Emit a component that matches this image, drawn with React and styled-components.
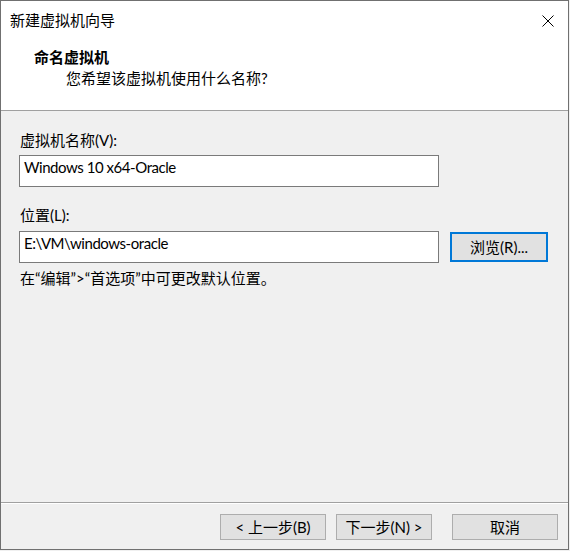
import React from "react";
import styled, { createGlobalStyle } from "styled-components";

const FONT = `Lato, "Noto Sans CJK SC", sans-serif`;

const Global = createGlobalStyle`
  html, body { margin: 0; padding: 0; background: #f0f0f0; }
  body {
    font-family: ${FONT};
    font-size: 15px;
    color: #000;
  }
  * { box-sizing: border-box; }
`;

const Frame = styled.div`
  width: 569px;
  height: 550px;
  border: 1px solid #707070;
  display: flex;
  flex-direction: column;
  background: #f0f0f0;
`;

const TitleBar = styled.div`
  height: 38px;
  background: #fff;
  display: flex;
  align-items: center;
  justify-content: space-between;
  padding-left: 9px;
`;

const TitleText = styled.span`
  line-height: 38px;
  font-size: 15px;
`;

const CloseButton = styled.div`
  width: 40px;
  height: 38px;
  display: flex;
  align-items: center;
  justify-content: center;
  padding-top: 1px;
`;

const Header = styled.div`
  height: 72px;
  background: #fff;
  border-bottom: 1px solid #a0a0a0;
  padding: 8px 0 0 33px;
`;

const HeaderTitle = styled.div`
  font-weight: bold;
  line-height: 20px;
`;

const HeaderSub = styled.div`
  line-height: 20px;
  margin-top: 1px;
  padding-left: 32px;
`;

const Body = styled.div`
  flex: 1;
  padding: 19px 0 0 18px;
  display: flex;
  flex-direction: column;
`;

const Label = styled.div`
  line-height: 20px;
  padding-left: 1px;
  margin-top: ${(p) => p.$top || 0}px;
  margin-bottom: ${(p) => p.$bottom || 5}px;
`;

const Row = styled.div`
  display: flex;
  align-items: center;
  gap: 11px;
`;

const TextBox = styled.div`
  width: 420px;
  height: 32px;
  border: 1px solid #7a7a7a;
  background: #fff;
  padding: 1px 4px;
  line-height: 20px;
  letter-spacing: -0.45px;
  white-space: nowrap;
`;

const Button = styled.button`
  font-family: ${FONT};
  font-size: 15px;
  color: #000;
  width: ${(p) => p.$w}px;
  height: ${(p) => p.$h || 26}px;
  background: #e1e1e1;
  border: ${(p) => (p.$focus ? "2px solid #0078d7" : "1px solid #adadad")};
  padding: 0;
  margin: 0;
  display: flex;
  align-items: center;
  justify-content: center;
  line-height: 20px;
  white-space: nowrap;
`;

const Hint = styled.div`
  line-height: 20px;
  margin-top: 5px;
  padding-left: 1px;
`;

const Divider = styled.div`
  height: 2px;
  border-top: 1px solid #a0a0a0;
  border-bottom: 1px solid #fff;
`;

const Footer = styled.div`
  height: 45px;
  display: flex;
  justify-content: flex-end;
  align-items: flex-start;
  padding: 10px 10px 0 0;
`;

const Spacer = styled.div`
  width: ${(p) => p.$w}px;
  flex: none;
`;

const CloseIcon = () => (
  <svg width="12" height="12" viewBox="0 0 12 12">
    <path d="M0.5 0.5 L11.5 11.5 M11.5 0.5 L0.5 11.5" stroke="#000" strokeWidth="1" fill="none" />
  </svg>
);

export default function App() {
  return (
    <>
      <Global />
      <Frame>
        <TitleBar>
          <TitleText>新建虚拟机向导</TitleText>
          <CloseButton>
            <CloseIcon />
          </CloseButton>
        </TitleBar>
        <Header>
          <HeaderTitle>命名虚拟机</HeaderTitle>
          <HeaderSub>您希望该虚拟机使用什么名称?</HeaderSub>
        </Header>
        <Body>
          <Label>虚拟机名称(V):</Label>
          <TextBox>Windows 10 x64-Oracle</TextBox>
          <Label $top={18} $bottom={6}>位置(L):</Label>
          <Row>
            <TextBox>E:\VM\windows-oracle</TextBox>
            <Button $w={98} $h={30} $focus>浏览(R)...</Button>
          </Row>
          <Hint>在“编辑”&gt;“首选项”中可更改默认位置。</Hint>
        </Body>
        <Divider />
        <Footer>
          <Button $w={106}>&lt; 上一步(B)</Button>
          <Spacer $w={10} />
          <Button $w={96}>下一步(N) &gt;</Button>
          <Spacer $w={20} />
          <Button $w={106}>取消</Button>
        </Footer>
      </Frame>
    </>
  );
}
